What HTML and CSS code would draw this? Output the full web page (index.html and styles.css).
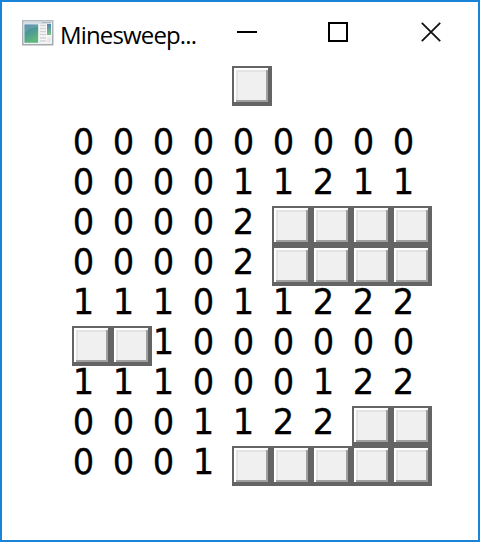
FILE: index.html
```
<!DOCTYPE html>
<html lang="en">
<head>
<meta charset="utf-8">
<title>Minesweeper</title>
<link rel="stylesheet" href="styles.css">
</head>
<body>
<div class="window">
  <header class="titlebar">
    <svg class="app-icon" width="32" height="26" viewBox="0 0 32 26">
      <defs>
        <linearGradient id="pane" x1="0" y1="0" x2=".4" y2="1"><stop offset="0" stop-color="#4c80a8"/><stop offset=".55" stop-color="#4d9c94"/><stop offset="1" stop-color="#62b67c"/></linearGradient>
        <linearGradient id="strip" x1="0" y1="0" x2="0" y2="1"><stop offset="0" stop-color="#4f86ac"/><stop offset="1" stop-color="#78c283"/></linearGradient>
        <linearGradient id="frame" x1="0" y1="0" x2="0" y2="1"><stop offset="0" stop-color="#b2bac2"/><stop offset="1" stop-color="#a5a8ad"/></linearGradient>
      </defs>
      <rect x=".75" y=".75" width="30" height="24" fill="#eef0f2" stroke="url(#frame)" stroke-width="1.5"/>
      <path d="M2 2h27v2H2z" fill="#d3dce3"/>
      <path d="M20 2h9v1h-9z" fill="#a9b9c6"/>
      <rect x="1.8" y="3.8" width="15" height="19.5" fill="#fafafa"/>
      <rect x="2.4" y="4.4" width="13.8" height="18.4" fill="url(#pane)"/>
      <path d="M2.4 13Q8 7 16.2 7V4.4H2.4z" fill="#fff" opacity=".12"/>
      <path d="M17.5 4h12v19h-12z" fill="#f7f7f7"/>
      <path d="M18 5.5h6M18 8.5h6M18 11.5h6M18 14.5h6M18 18h6M18 21h6" stroke="#d2d2d5" stroke-width="1.4"/>
      <rect x="25" y="4" width="4" height="11" fill="url(#strip)"/>
      <path d="M25 17.5h4v5h-4z" fill="#e6e7ea"/>
    </svg>
    <span class="title">Minesweep...</span>
    <svg class="control" width="20" height="20" viewBox="0 0 20 20"><path d="M0 9h20v2H0z"/></svg>
    <svg class="control" width="20" height="20" viewBox="0 0 20 20"><path d="M1 1h18v18H1z" fill="none" stroke="#000" stroke-width="2"/></svg>
    <svg class="control" width="20" height="20" viewBox="0 0 20 20"><path d="M.8.8l18.4 18.4M19.2.8L.8 19.2" fill="none" stroke="#111" stroke-width="1.8"/></svg>
  </header>
  <main class="game">
    <button class="tile reset" aria-label="New game"></button>
    <div class="board" id="board"></div>
  </main>
</div>
<script src="board.js"></script>
</body>
</html>
```
FILE: styles.css
```
* { box-sizing: border-box; }
body { margin: 0; background: #fff; }
.window {
  width: 480px;
  height: 542px;
  border: 2px solid #1883d7;
  background: #fff;
}
.titlebar {
  display: flex;
  align-items: center;
  height: 60px;
  padding-left: 20px;
}
.app-icon { margin-top: 1px; }
.title {
  width: 175px;
  margin-left: 6px;
  margin-top: 4px;
  font: 24px "Open Sans", "Noto Sans", sans-serif;
  letter-spacing: -0.85px;
  white-space: nowrap;
  color: #000;
}
.control { flex: none; margin-left: 2px; }
.control + .control { margin-left: 71px; }
.control:last-child { margin-left: 73px; }
.game {
  display: flex;
  flex-direction: column;
  width: 360px;
  margin: 4px 0 0 70px;
}
.tile {
  display: block;
  width: 40px;
  height: 40px;
  padding: 0;
  border: solid #646464;
  border-width: 2px 4px 4px 2px;
  border-radius: 0;
  background:
    linear-gradient(#fff, #fff) 0 0 / 100% 2px no-repeat,
    linear-gradient(#fff, #fff) 0 0 / 2px 100% no-repeat,
    linear-gradient(#a0a0a0, #a0a0a0) 100% 0 / 2px 100% no-repeat,
    linear-gradient(#a0a0a0, #a0a0a0) 0 100% / 100% 2px no-repeat,
    linear-gradient(#e3e3e3, #e3e3e3) 0 2px / 100% 2px no-repeat,
    linear-gradient(#e3e3e3, #e3e3e3) 2px 0 / 2px 100% no-repeat,
    #f0f0f0;
  background-origin: padding-box;
}
.reset { margin-left: 160px; }
.board {
  display: grid;
  grid-template-columns: repeat(9, 40px);
  grid-auto-rows: 40px;
  margin-top: 20px;
}
.count {
  font: 35.5px/32px "DejaVu Sans", sans-serif;
  -webkit-text-stroke: 0.3px #000;
  transform: scaleX(0.95);
  transform-origin: 16px 0;
  color: #000;
}
```
FILE: board.js
```
// Revealed neighbour counts; "#" marks a covered square.
const rows = [
  "000000000",
  "000011211",
  "00002####",
  "00002####",
  "111011222",
  "##1000000",
  "111000122",
  "0001122##",
  "0001#####"
];
const board = document.getElementById("board");
for (const square of rows.join("")) {
  const covered = square === "#";
  const cell = document.createElement(covered ? "button" : "span");
  cell.className = covered ? "tile" : "count";
  if (!covered) cell.textContent = square;
  board.append(cell);
}
```
